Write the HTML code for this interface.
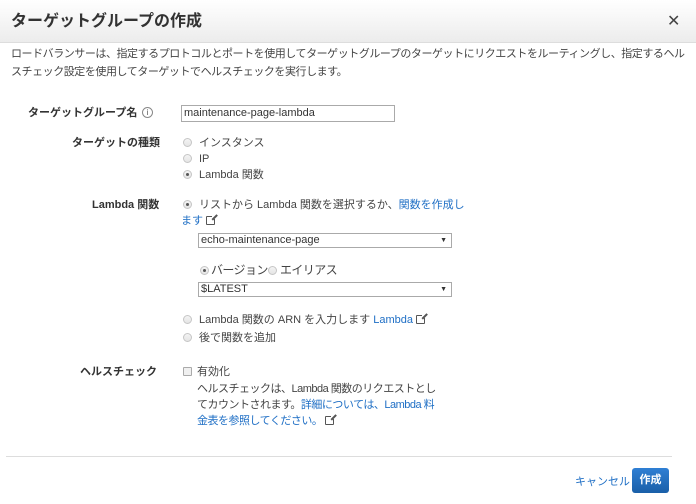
<!DOCTYPE html>
<html><head><meta charset="utf-8"><style>
*{margin:0;padding:0;box-sizing:border-box}
body{width:696px;height:504px;background:#fff;position:relative;overflow:hidden;font-family:"Liberation Sans","Noto Sans CJK JP",sans-serif;font-size:11px;color:#444}
.a{position:absolute;white-space:nowrap;line-height:14px}
.hdr{position:absolute;left:0;top:0;width:696px;height:43px;background:linear-gradient(#fff,#ececec);border-bottom:1px solid #ddd}
.b{font-weight:bold;color:#333}
.r{position:absolute;width:9px;height:9px;border-radius:50%;border:1px solid #c6c6c6;background:linear-gradient(#f4f4f4,#e4e4e4)}
.r.on::after{content:"";position:absolute;left:2px;top:2px;width:3px;height:3px;border-radius:50%;background:#555}
.lk{color:#1f6fc5}
.sel{position:absolute;border:1px solid #aaa;height:15px;background:#fff;padding-left:2px;line-height:13px;color:#333;font-size:11px}
.sel::after{content:"▼";position:absolute;right:4px;top:0;font-size:7px;color:#333}
.ext{display:inline-block;width:9px;height:9px;border:1px solid #555;margin-left:3px;position:relative;vertical-align:-1px;border-radius:1px}
.ext::after{content:"";position:absolute;right:-3px;top:-3px;width:5px;height:5px;background:#fff}
.ext::before{content:"";position:absolute;right:-3px;top:-3px;width:7px;height:1.5px;background:#555;transform:rotate(-45deg);transform-origin:right;z-index:1}
</style></head><body>
<div class="hdr"></div>
<div class="a" style="left:11px;top:12px;font-size:16px;font-weight:bold;color:#333;line-height:20px">ターゲットグループの作成</div>
<div class="a" style="left:667px;top:12px;font-size:16px;color:#444;line-height:20px">✕</div>
<div class="a" style="left:11px;top:45px;line-height:18px;letter-spacing:-0.45px">ロードバランサーは、指定するプロトコルとポートを使用してターゲットグループのターゲットにリクエストをルーティングし、指定するヘル<br>スチェック設定を使用してターゲットでヘルスチェックを実行します。</div>
<div class="a b" style="left:28px;top:106px">ターゲットグループ名</div>
<div class="a" style="left:142px;top:107px;width:11px;height:11px;border:1px solid #888;border-radius:50%;font-size:8px;text-align:center;line-height:9px;color:#555">i</div>
<div class="a" style="left:181px;top:105px;width:214px;height:17px;border:1px solid #aaa;padding-left:2px;line-height:15px;color:#333">maintenance-page-lambda</div>
<div class="a b" style="left:72px;top:136px">ターゲットの種類</div>
<div class="r" style="left:183px;top:138px"></div><div class="a" style="left:199px;top:136px">インスタンス</div>
<div class="r" style="left:183px;top:154px"></div><div class="a" style="left:199px;top:152px">IP</div>
<div class="r on" style="left:183px;top:170px"></div><div class="a" style="left:199px;top:168px">Lambda 関数</div>
<div class="a b" style="left:92px;top:198px">Lambda 関数</div>
<div class="r on" style="left:183px;top:200px"></div><div class="a" style="left:199px;top:198px">リストから Lambda 関数を選択するか、<span class="lk">関数を作成し</span></div>
<div class="a lk" style="left:181px;top:214px">ます<span class="ext"></span></div>
<div class="sel" style="left:198px;top:233px;width:254px">echo-maintenance-page</div>
<div class="r on" style="left:200px;top:266px"></div><div class="a" style="left:211px;top:263px;font-size:12px;letter-spacing:-0.6px">バージョン</div>
<div class="r" style="left:268px;top:266px"></div><div class="a" style="left:280px;top:263px;font-size:12px;letter-spacing:-0.6px">エイリアス</div>
<div class="sel" style="left:198px;top:282px;width:254px">$LATEST</div>
<div class="r" style="left:183px;top:315px"></div><div class="a" style="left:199px;top:313px">Lambda 関数の ARN を入力します <span class="lk">Lambda</span><span class="ext"></span></div>
<div class="r" style="left:183px;top:333px"></div><div class="a" style="left:199px;top:331px">後で関数を追加</div>
<div class="a b" style="left:80px;top:365px">ヘルスチェック</div>
<div class="a" style="left:183px;top:367px;width:9px;height:9px;border:1px solid #aaa;border-radius:1px;background:#f0f0f0"></div>
<div class="a" style="left:197px;top:365px">有効化</div>
<div class="a" style="left:197px;top:381px;line-height:16px;letter-spacing:-0.5px">ヘルスチェックは、Lambda 関数のリクエストとし<br>てカウントされます。<span class="lk">詳細については、Lambda 料<br>金表を参照してください。</span><span class="ext"></span></div>
<div class="a" style="left:6px;top:456px;width:666px;height:1px;background:#ddd"></div>
<div class="a lk" style="left:575px;top:475px">キャンセル</div>
<div class="a" style="left:632px;top:468px;width:37px;height:25px;border-radius:3px;background:linear-gradient(#2f7fd4,#1a5fa8);color:#fff;font-weight:bold;text-align:center;line-height:25px">作成</div>
</body></html>
